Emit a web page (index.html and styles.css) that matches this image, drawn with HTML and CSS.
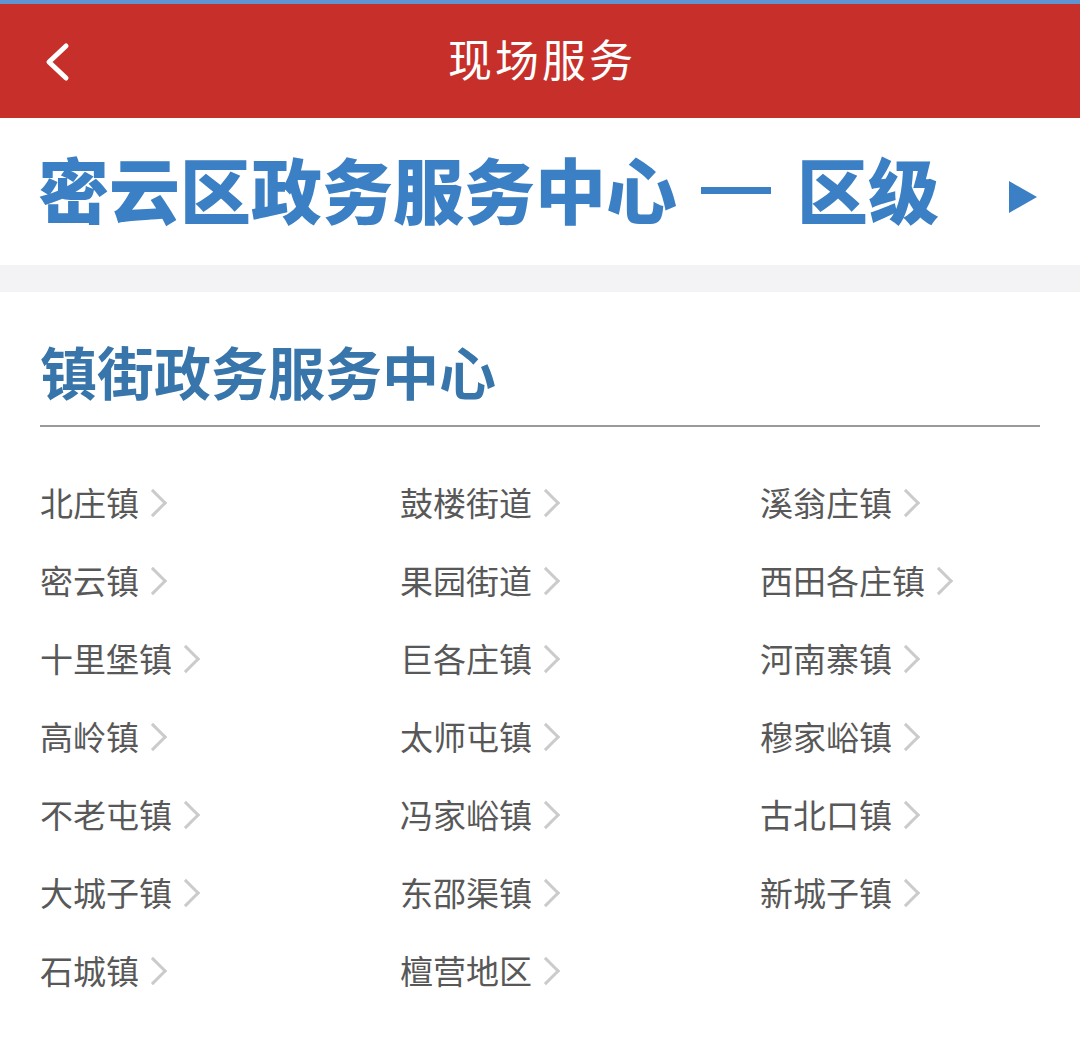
FILE: index.html
```html
<!DOCTYPE html>
<html lang="zh-CN">
<head>
<meta charset="utf-8">
<title>现场服务</title>
<link rel="stylesheet" href="styles.css">
</head>
<body>
<div class="page">
  <div class="topline"></div>
  <header class="header">
    <svg class="back" width="30" height="40" viewBox="0 0 30 40"><polyline points="24,4 7,20 24,36" fill="none" stroke="#fff" stroke-width="5" stroke-linecap="round" stroke-linejoin="round"/></svg>
    <h1 class="title">现场服务</h1>
  </header>
  <section class="banner">
    <div class="banner-text">
      <span class="banner-main">密云区政务服务中心</span>
      <span class="banner-dash"></span>
      <span class="banner-sub">区级</span>
    </div>
    <svg class="tri" width="28" height="32" viewBox="0 0 28 32"><polygon points="0,0 28,16 0,32" fill="#3b7fc4"/></svg>
  </section>
  <div class="band"></div>
  <section class="towns">
    <h2 class="heading">镇街政务服务中心</h2>
    <div class="rule"></div>
    <ul class="grid">
      <li class="item">北庄镇<span class="chev"></span></li>
      <li class="item">鼓楼街道<span class="chev"></span></li>
      <li class="item">溪翁庄镇<span class="chev"></span></li>
      <li class="item">密云镇<span class="chev"></span></li>
      <li class="item">果园街道<span class="chev"></span></li>
      <li class="item">西田各庄镇<span class="chev"></span></li>
      <li class="item">十里堡镇<span class="chev"></span></li>
      <li class="item">巨各庄镇<span class="chev"></span></li>
      <li class="item">河南寨镇<span class="chev"></span></li>
      <li class="item">高岭镇<span class="chev"></span></li>
      <li class="item">太师屯镇<span class="chev"></span></li>
      <li class="item">穆家峪镇<span class="chev"></span></li>
      <li class="item">不老屯镇<span class="chev"></span></li>
      <li class="item">冯家峪镇<span class="chev"></span></li>
      <li class="item">古北口镇<span class="chev"></span></li>
      <li class="item">大城子镇<span class="chev"></span></li>
      <li class="item">东邵渠镇<span class="chev"></span></li>
      <li class="item">新城子镇<span class="chev"></span></li>
      <li class="item">石城镇<span class="chev"></span></li>
      <li class="item">檀营地区<span class="chev"></span></li>
    </ul>
  </section>
</div>
</body>
</html>
```
FILE: styles.css
```css
* { box-sizing: border-box; }
html, body { margin: 0; padding: 0; background: #fff; }
body { font-family: "Noto Sans CJK SC", "Noto Sans", sans-serif; width: 1080px; height: 1053px; overflow: hidden; }
.page { width: 1080px; }
.topline { height: 4px; background: #5f94d2; }
.header {
  height: 114px;
  background: #c7302a;
  display: flex;
  align-items: center;
  justify-content: center;
  position: relative;
}
.back { position: absolute; left: 42px; top: 38px; }
.title {
  margin: 0;
  color: #fff;
  font-size: 44px;
  font-weight: 400;
  line-height: 1;
  letter-spacing: 3px;
  padding-bottom: 6px;
  padding-left: 4px;
}
.banner {
  height: 147px;
  display: flex;
  align-items: center;
  padding: 0 43px 0 38px;
  justify-content: space-between;
}
.banner-text {
  display: flex;
  align-items: center;
  color: #3b7fc4;
  font-weight: 900;
  font-size: 71px;
  line-height: 1;
  padding-bottom: 8px;
}
.banner-main { letter-spacing: 0; }
.banner-dash {
  width: 70px;
  height: 7px;
  background: #3b7fc4;
  margin: 6px 26px 0 24px;
}
.tri { margin-top: 10px; }
.band { height: 27px; background: #f3f3f5; }
.towns { padding: 48px 40px 0 40px; }
.heading {
  margin: 0;
  color: #3775aa;
  font-size: 57px;
  font-weight: 700;
  line-height: 60px;
}
.rule { height: 2px; background: #9a9a9a; margin-top: 25px; }
.grid {
  list-style: none;
  margin: 36px 0 0 0;
  padding: 0;
  display: grid;
  grid-template-columns: 360px 360px 280px;
  grid-auto-rows: 78px;
}
.item {
  display: flex;
  align-items: center;
  color: #585858;
  font-size: 33px;
  line-height: 1;
}
.chev {
  display: inline-block;
  flex: none;
  width: 20px;
  height: 20px;
  border-top: 3px solid #cbcbcb;
  border-right: 3px solid #cbcbcb;
  transform: rotate(45deg);
  margin-left: 4px;
  margin-top: 2px;
}
```
